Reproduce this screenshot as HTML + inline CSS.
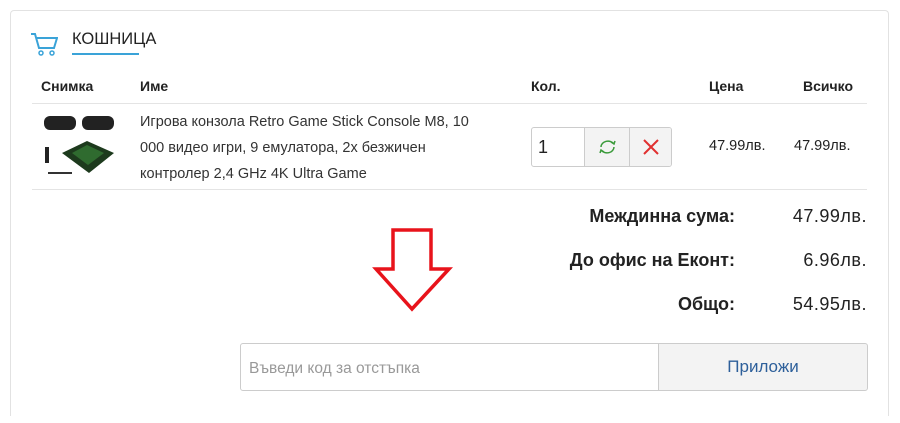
<!DOCTYPE html>
<html style="margin:0;width:900px;height:423px;overflow:hidden"><head><meta charset="utf-8"><style>
body{margin:0;width:900px;height:423px;background:#fff;font-family:"Liberation Sans",sans-serif;color:#222;position:relative;overflow:hidden}
.card{position:absolute;left:10px;top:10px;width:877px;height:405px;border:1px solid #e2e2e2;border-bottom:none;border-radius:4px 4px 0 0}
.abs{position:absolute}
.th{font-weight:bold;font-size:14px;top:78px}
.r{text-align:right}
.s{font-size:18px}
</style></head><body>
<div class="card"></div>
<svg class="abs" style="left:30px;top:32px" width="28" height="25" viewBox="0 0 28 25"><path d="M1 2h4l4 14h15l3-10H7" fill="none" stroke="#3aa3d8" stroke-width="2"/><circle cx="11" cy="21" r="2" fill="none" stroke="#3aa3d8" stroke-width="1.5"/><circle cx="22" cy="21" r="2" fill="none" stroke="#3aa3d8" stroke-width="1.5"/></svg>
<div class="abs" style="left:72px;top:30px;font-size:16.5px;color:#222">КОШНИЦА</div>
<div class="abs" style="left:72px;top:53px;width:67px;height:2px;background:#3aa3d8"></div>
<div class="abs th" style="left:41px">Снимка</div>
<div class="abs th" style="left:140px">Име</div>
<div class="abs th" style="left:531px">Кол.</div>
<div class="abs th" style="left:709px">Цена</div>
<div class="abs th" style="left:803px">Всичко</div>
<div class="abs" style="left:32px;top:103px;width:835px;height:1px;background:#e4e4e4"></div>
<div class="abs" style="left:32px;top:189px;width:835px;height:1px;background:#e4e4e4"></div>
<svg class="abs" style="left:42px;top:111px" width="76" height="72"><g fill="#222"><rect x="2" y="5" width="32" height="14" rx="6"/><rect x="40" y="5" width="32" height="14" rx="6"/><rect x="3" y="36" width="4" height="16"/></g><path d="M20 42l25-12 27 12-25 20z" fill="#1d3a1d"/><path d="M30 42l15-8 17 8-16 12z" fill="#2f6b2f"/><line x1="6" y1="62" x2="30" y2="62" stroke="#333" stroke-width="2"/></svg>
<div class="abs" style="left:140px;top:109px;font-size:14.5px;line-height:26px;width:365px;color:#333">Игрова конзола Retro Game Stick Console M8, 10<br>000 видео игри, 9 емулатора, 2x безжичен<br>контролер 2,4 GHz 4K Ultra Game</div>
<div class="abs" style="left:531px;top:127px;width:139px;height:38px;border:1px solid #ccc;border-radius:3px;overflow:hidden">
 <div class="abs" style="left:0;top:0;width:52px;height:38px;font-size:18px;line-height:38px;padding-left:6px">1</div>
 <div class="abs" style="left:52px;top:0;width:45px;height:38px;background:#f3f3f3;border-left:1px solid #ccc"><svg width="45" height="38"><path d="M16 19a7 6 0 0 1 13-3M29 19a7 6 0 0 1-13 3" fill="none" stroke="#3a9a3a" stroke-width="1.5"/><path d="M26 14l3 2 1-3M19 24l-3-2-1 3" fill="none" stroke="#3a9a3a" stroke-width="1.5"/></svg></div>
 <div class="abs" style="left:97px;top:0;width:42px;height:38px;background:#f3f3f3;border-left:1px solid #ccc"><svg width="42" height="38"><path d="M14 12l14 14M28 12L14 26" stroke="#e03030" stroke-width="2"/></svg></div>
</div>
<div class="abs" style="left:709px;top:138px;font-size:14.5px">47.99лв.</div>
<div class="abs" style="left:794px;top:138px;font-size:14.5px">47.99лв.</div>
<div class="abs r s" style="right:165px;top:206px;font-weight:bold">Междинна сума:</div>
<div class="abs r s" style="right:33px;top:206px;letter-spacing:0.5px">47.99лв.</div>
<div class="abs r s" style="right:165px;top:250px;font-weight:bold">До офис на Еконт:</div>
<div class="abs r s" style="right:33px;top:250px;letter-spacing:0.5px">6.96лв.</div>
<div class="abs r s" style="right:165px;top:294px;font-weight:bold">Общо:</div>
<div class="abs r s" style="right:33px;top:294px;letter-spacing:0.5px">54.95лв.</div>
<svg class="abs" style="left:370px;top:225px" width="85" height="90"><path d="M23 5H61V44H79L42 84 6 44H23Z" fill="none" stroke="#e8131b" stroke-width="3.5" stroke-linejoin="miter"/></svg>
<div class="abs" style="left:240px;top:343px;width:418px;height:46px;border:1px solid #ccc;border-radius:3px 0 0 3px"></div>
<div class="abs" style="left:249px;top:360px;font-size:15.5px;color:#999">Въведи код за отстъпка</div>
<div class="abs" style="left:658px;top:343px;width:208px;height:46px;border:1px solid #ccc;border-radius:0 3px 3px 0;background:#f3f3f3;color:#2d5f9a;font-size:17px;text-align:center;line-height:46px">Приложи</div>
</body></html>
